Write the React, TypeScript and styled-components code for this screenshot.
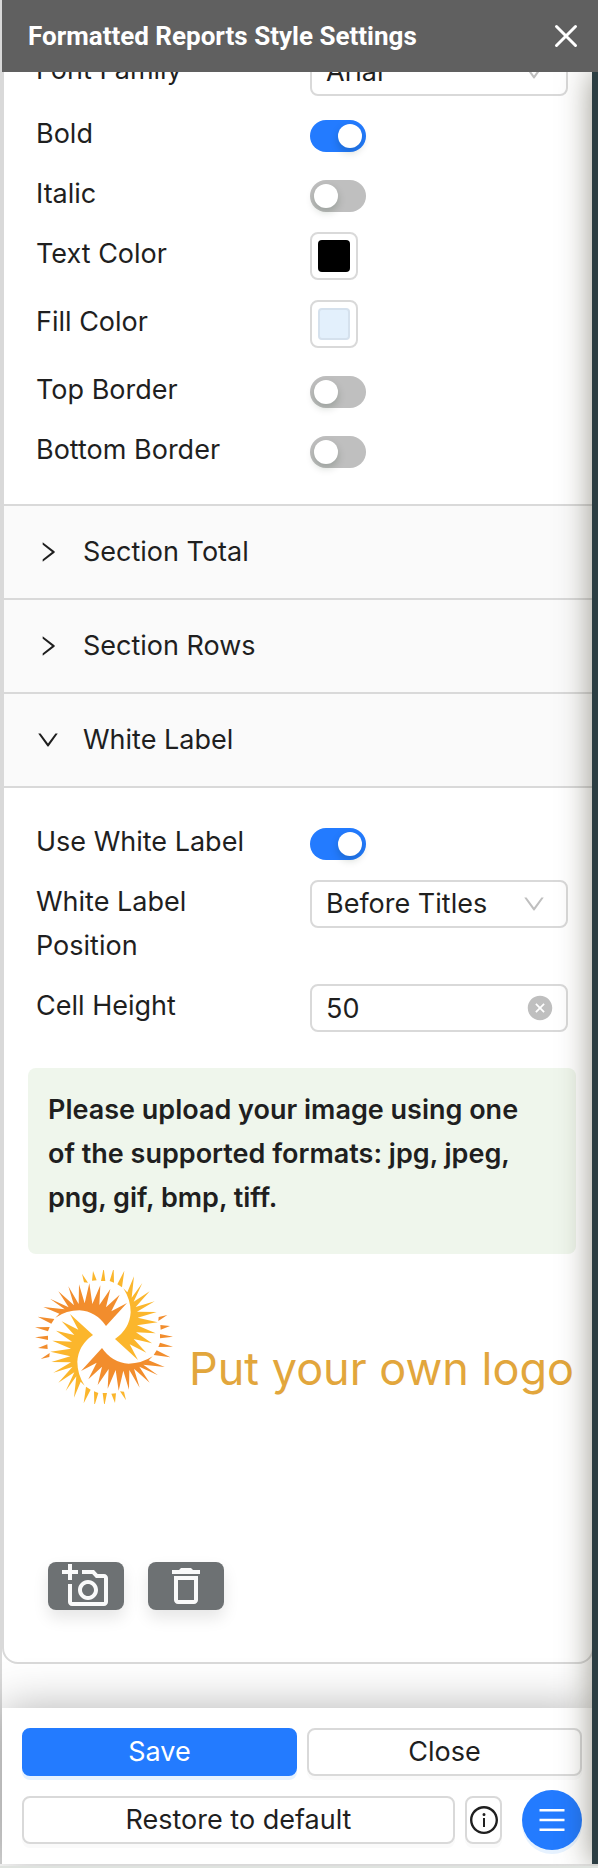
import React from "react";
import styled, { createGlobalStyle, css } from "styled-components";
import {
  AiFillCloseCircle,
  AiOutlineDown,
  AiOutlineInfoCircle,
  AiOutlineMenu,
  AiOutlineRight,
} from "react-icons/ai";
import { MdDeleteOutline, MdOutlineAddAPhoto } from "react-icons/md";

const GlobalStyle = createGlobalStyle`
  *, *::before, *::after { box-sizing: border-box; }
  body {
    margin: 0;
    background: #fff;
    color: #1f1f1f;
    font-family: Inter, "Liberation Sans", sans-serif;
    font-size: 27px;
    line-height: 44px;
  }
  button, input, select { font: inherit; color: inherit; margin: 0; }
`;

const line = "#d9d9d9";
const blue = "#237bff";

const Page = styled.div`
  min-height: 100vh;
  display: flex;
  flex-direction: column;
  overflow: hidden;
  border-bottom: 2px solid #dfe3df;
`;

const TitleBar = styled.header`
  position: relative;
  z-index: 3;
  height: 72px;
  flex: none;
  display: flex;
  align-items: center;
  justify-content: space-between;
  padding: 0 20px 0 26px;
  border-left: 2px solid ${line};
  background: #606060;
  color: #fff;
`;

const Title = styled.h1`
  margin: 0;
  font: 700 26px/44px Roboto, sans-serif;
`;

const IconButton = styled.button`
  display: flex;
  padding: 0;
  border: 0;
  background: none;
`;

const Main = styled.div`
  flex: 1;
  display: flex;
  margin-bottom: 2px;
`;

const Panel = styled.main`
  flex: 1;
  min-width: 0;
  display: flex;
  flex-direction: column;
  border-left: 2px solid ${line};
`;

const Backdrop = styled.div`
  position: relative;
  z-index: 2;
  flex: none;
  width: 60px;
  margin-right: -54px;
  background: #2c3e43;
  box-shadow: 0 0 32px rgba(50, 45, 25, 0.5);
  pointer-events: none;
`;

const Collapse = styled.div`
  flex: 1;
  margin: -58px -2px 44px 0;
  border: 2px solid ${line};
  border-radius: 16px;
`;

const SectionHeader = styled.button`
  width: 100%;
  height: 94px;
  display: flex;
  align-items: center;
  gap: 22px;
  padding: 0 31px;
  border: 0;
  border-top: 2px solid ${line};
  background: #fafafa;
  text-align: left;
`;

const SectionBody = styled.div<{ $ruled?: boolean }>`
  padding: 32px 24px 32px 32px;
  ${(p) => p.$ruled && css`border-top: 2px solid ${line}; padding-bottom: 52px;`}
`;

const Fields = styled.div`
  display: flex;
  flex-direction: column;
  gap: 16px;
`;

const Field = styled.div`
  display: grid;
  grid-template-columns: 274px 1fr;
  align-items: start;
`;

const Label = styled.label`
  padding-right: 48px;
`;

const Toggle = styled.input`
  appearance: none;
  width: 56px;
  height: 32px;
  margin-top: 8px;
  padding: 4px;
  border-radius: 16px;
  background: #bfbfbf;
  &::before {
    content: "";
    display: block;
    width: 24px;
    height: 24px;
    border-radius: 50%;
    background: #fff;
    box-shadow: 0 4px 8px rgba(0, 35, 11, 0.2);
  }
  &:checked { background: ${blue}; }
  &:checked::before { margin-left: 24px; }
`;

const Swatch = styled.input`
  appearance: none;
  width: 48px;
  height: 48px;
  margin-bottom: 4px;
  padding: 6px;
  border: 2px solid ${line};
  border-radius: 8px;
  background: #fff;
  &::-webkit-color-swatch-wrapper { padding: 0; }
  &::-webkit-color-swatch {
    border: 2px solid rgba(0, 0, 0, 0.06);
    border-radius: 4px;
  }
`;

const Control = styled.div`
  position: relative;
  height: 48px;
`;

const boxed = css`
  appearance: none;
  display: block;
  width: 100%;
  height: 48px;
  padding: 0 48px 0 14px;
  border: 2px solid ${line};
  border-radius: 8px;
  background: #fff;
`;

const Select = styled.select`${boxed}`;
const TextInput = styled.input`${boxed}`;

const Adornment = styled.span<{ $right: number }>`
  position: absolute;
  right: ${(p) => p.$right}px;
  top: 0;
  height: 48px;
  display: flex;
  align-items: center;
  color: #bfbfbf;
  pointer-events: none;
`;

const Notice = styled.p`
  margin: 36px -8px 16px;
  padding: 20px 40px 34px 20px;
  border-radius: 8px;
  background: #eff6ec;
  font-weight: 600;
`;

const Logo = styled.div`
  display: flex;
  align-items: center;
  gap: 16px;
  height: 134px;
  margin: 0 -8px 158px -1px;
  svg { flex: none; }
`;

const LogoText = styled.span`
  padding-top: 64px;
  color: #e2a63c;
  font-size: 45px;
  line-height: 64px;
  white-space: nowrap;
`;

const ImageActions = styled.div`
  display: flex;
  gap: 24px;
  padding-left: 12px;
`;

const ImageButton = styled.button`
  width: 76px;
  height: 48px;
  display: flex;
  align-items: center;
  justify-content: center;
  padding: 0;
  border: 0;
  border-radius: 8px;
  background: #6d7173;
  color: #fafafa;
  box-shadow: 0 8px 16px rgba(0, 0, 0, 0.1);
`;

const Footer = styled.footer`
  position: relative;
  display: flex;
  flex-direction: column;
  gap: 14px;
  padding: 20px 10px 14px 20px;
  background: #fff;
  box-shadow: 0 0 44px rgba(0, 0, 0, 0.3);
`;

const ButtonRow = styled.div`
  display: flex;
  align-items: center;
  gap: 10px;
`;

const Button = styled.button<{ $primary?: boolean; $fixed?: boolean }>`
  flex: ${(p) => (p.$fixed ? "0 0 37px" : "1 1 0")};
  height: 48px;
  display: flex;
  align-items: center;
  justify-content: center;
  padding: 0;
  border: 2px solid ${(p) => (p.$primary ? blue : line)};
  border-radius: 8px;
  background: ${(p) => (p.$primary ? blue : "#fff")};
  color: ${(p) => (p.$primary ? "#fff" : "#1f1f1f")};
  box-shadow: 0 4px 0 ${(p) => (p.$primary ? "#e6f2ff" : "#fafafa")};
`;

const MenuButton = styled.button`
  flex: none;
  width: 60px;
  height: 60px;
  margin-left: 10px;
  display: flex;
  align-items: center;
  justify-content: center;
  padding: 0;
  border: 0;
  border-radius: 50%;
  background: ${blue};
  color: #fff;
  box-shadow: 0 4px 0 #e6f2ff;
`;

const arm =
  "M258 228L321 159L274 184L299 134L258 172L271 117L238 165L241 106L217 162L208 100L194 160L177 103L176 162L145 109L162 166L115 124L146 172L90 146L134 178L70 171L118 191L106 203Q140 181 178 181Q228 184 258 228Z" +
  "M53 200L103 207L94 221ZM45 232L89 231L84 244ZM45 262L84 257L84 270ZM54 294L82 283L83 297ZM62 327L89 309L88 321Z";

const SunMark = () => (
  <svg width="138" height="134" viewBox="45 60 414 402" aria-hidden="true">
    {[0, 90, 180, 270].map((turn) => (
      <path
        key={turn}
        d={arm}
        fill={turn % 180 ? "#fbb62c" : "#f28d2d"}
        transform={`rotate(${turn} 252 261)`}
      />
    ))}
  </svg>
);

const SwitchField = ({ id, label, on }: { id: string; label: string; on?: boolean }) => (
  <Field>
    <Label htmlFor={id}>{label}</Label>
    <Toggle id={id} type="checkbox" role="switch" defaultChecked={on} />
  </Field>
);

const ColorField = ({ id, label, value }: { id: string; label: string; value: string }) => (
  <Field>
    <Label htmlFor={id}>{label}</Label>
    <Swatch id={id} type="color" defaultValue={value} />
  </Field>
);

const SelectField = ({ id, label, value }: { id: string; label: string; value: string }) => (
  <Field>
    <Label htmlFor={id}>{label}</Label>
    <Control>
      <Select id={id} defaultValue={value}>
        <option>{value}</option>
      </Select>
      <Adornment $right={21}>
        <AiOutlineDown size={26} />
      </Adornment>
    </Control>
  </Field>
);

export default function App() {
  return (
    <Page>
      <GlobalStyle />
      <TitleBar>
        <Title>Formatted Reports Style Settings</Title>
        <IconButton aria-label="Close settings">
          <svg width="24" height="24" viewBox="0 0 24 24" stroke="#fff" strokeWidth="3" strokeLinecap="round">
            <path d="M2.500 2.500L21.500 21.500M21.500 2.500L2.500 21.500" />
          </svg>
        </IconButton>
      </TitleBar>
      <Main>
        <Panel>
          <Collapse>
            <SectionBody>
              <Fields>
                <SelectField id="font-family" label="Font Family" value="Arial" />
                <SwitchField id="bold" label="Bold" on />
                <SwitchField id="italic" label="Italic" />
                <ColorField id="text-color" label="Text Color" value="#000000" />
                <ColorField id="fill-color" label="Fill Color" value="#e3f0fc" />
                <SwitchField id="top-border" label="Top Border" />
                <SwitchField id="bottom-border" label="Bottom Border" />
              </Fields>
            </SectionBody>
            <SectionHeader aria-expanded="false">
              <AiOutlineRight size={26} />
              Section Total
            </SectionHeader>
            <SectionHeader aria-expanded="false">
              <AiOutlineRight size={26} />
              Section Rows
            </SectionHeader>
            <SectionHeader aria-expanded="true">
              <AiOutlineDown size={26} />
              White Label
            </SectionHeader>
            <SectionBody $ruled>
              <Fields>
                <SwitchField id="use-white-label" label="Use White Label" on />
                <SelectField id="position" label="White Label Position" value="Before Titles" />
                <Field>
                  <Label htmlFor="cell-height">Cell Height</Label>
                  <Control>
                    <TextInput id="cell-height" type="text" defaultValue="50" />
                    <Adornment $right={14}>
                      <AiFillCloseCircle size={28} />
                    </Adornment>
                  </Control>
                </Field>
              </Fields>
              <Notice>
                Please upload your image using one of the supported formats: jpg, jpeg, png, gif, bmp, tiff.
              </Notice>
              <Logo>
                <SunMark />
                <LogoText>Put your own logo</LogoText>
              </Logo>
              <ImageActions>
                <ImageButton aria-label="Add image">
                  <MdOutlineAddAPhoto size={48} />
                </ImageButton>
                <ImageButton aria-label="Delete image">
                  <MdDeleteOutline size={48} />
                </ImageButton>
              </ImageActions>
            </SectionBody>
          </Collapse>
          <Footer>
            <ButtonRow>
              <Button $primary>Save</Button>
              <Button>Close</Button>
            </ButtonRow>
            <ButtonRow>
              <Button>Restore to default</Button>
              <Button $fixed aria-label="Information">
                <AiOutlineInfoCircle size={32} />
              </Button>
              <MenuButton aria-label="Menu">
                <AiOutlineMenu size={32} />
              </MenuButton>
            </ButtonRow>
          </Footer>
        </Panel>
        <Backdrop />
      </Main>
    </Page>
  );
}
